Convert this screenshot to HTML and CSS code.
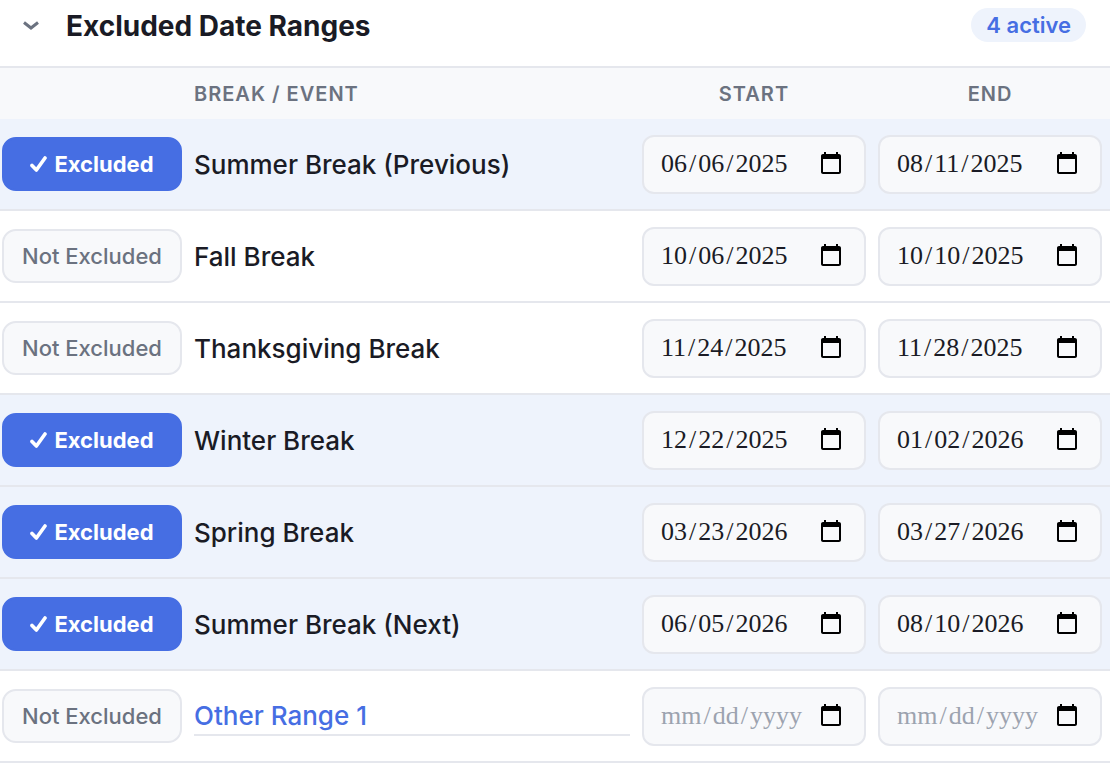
FILE: index.html
```html
<!DOCTYPE html>
<html lang="en">
<head>
<meta charset="utf-8">
<title>Excluded Date Ranges</title>
<link rel="stylesheet" href="styles.css">
</head>
<body>
<section class="panel">
  <header class="panel-header">
    <button class="collapse" type="button" aria-label="Collapse section" aria-expanded="true">
      <svg class="chevron" viewBox="0 0 18 18" aria-hidden="true"><path d="M2 5.5 9 11 16 5.5"/></svg>
    </button>
    <h2 class="panel-title">Excluded Date Ranges</h2>
    <span class="badge">4 active</span>
  </header>
  <table class="ranges">
    <thead>
      <tr>
        <th class="col-toggle"></th>
        <th class="col-name" scope="col">BREAK / EVENT</th>
        <th class="col-date" scope="col">START</th>
        <th class="col-date col-end" scope="col">END</th>
      </tr>
    </thead>
    <tbody>
      <tr class="is-excluded">
        <td class="col-toggle"><button class="toggle toggle-on" type="button" aria-pressed="true"><svg class="check" viewBox="0 0 18 18" aria-hidden="true"><path d="M2 10.4 6.4 15 15 3"/></svg>Excluded</button></td>
        <td class="col-name">Summer Break (Previous)</td>
        <td class="col-date"><input class="date" type="date" aria-label="Summer Break (Previous) start" value="2025-06-06"></td>
        <td class="col-date col-end"><input class="date" type="date" aria-label="Summer Break (Previous) end" value="2025-08-11"></td>
      </tr>
      <tr>
        <td class="col-toggle"><button class="toggle" type="button" aria-pressed="false">Not Excluded</button></td>
        <td class="col-name">Fall Break</td>
        <td class="col-date"><input class="date" type="date" aria-label="Fall Break start" value="2025-10-06"></td>
        <td class="col-date col-end"><input class="date" type="date" aria-label="Fall Break end" value="2025-10-10"></td>
      </tr>
      <tr>
        <td class="col-toggle"><button class="toggle" type="button" aria-pressed="false">Not Excluded</button></td>
        <td class="col-name">Thanksgiving Break</td>
        <td class="col-date"><input class="date" type="date" aria-label="Thanksgiving Break start" value="2025-11-24"></td>
        <td class="col-date col-end"><input class="date" type="date" aria-label="Thanksgiving Break end" value="2025-11-28"></td>
      </tr>
      <tr class="is-excluded">
        <td class="col-toggle"><button class="toggle toggle-on" type="button" aria-pressed="true"><svg class="check" viewBox="0 0 18 18" aria-hidden="true"><path d="M2 10.4 6.4 15 15 3"/></svg>Excluded</button></td>
        <td class="col-name">Winter Break</td>
        <td class="col-date"><input class="date" type="date" aria-label="Winter Break start" value="2025-12-22"></td>
        <td class="col-date col-end"><input class="date" type="date" aria-label="Winter Break end" value="2026-01-02"></td>
      </tr>
      <tr class="is-excluded">
        <td class="col-toggle"><button class="toggle toggle-on" type="button" aria-pressed="true"><svg class="check" viewBox="0 0 18 18" aria-hidden="true"><path d="M2 10.4 6.4 15 15 3"/></svg>Excluded</button></td>
        <td class="col-name">Spring Break</td>
        <td class="col-date"><input class="date" type="date" aria-label="Spring Break start" value="2026-03-23"></td>
        <td class="col-date col-end"><input class="date" type="date" aria-label="Spring Break end" value="2026-03-27"></td>
      </tr>
      <tr class="is-excluded">
        <td class="col-toggle"><button class="toggle toggle-on" type="button" aria-pressed="true"><svg class="check" viewBox="0 0 18 18" aria-hidden="true"><path d="M2 10.4 6.4 15 15 3"/></svg>Excluded</button></td>
        <td class="col-name">Summer Break (Next)</td>
        <td class="col-date"><input class="date" type="date" aria-label="Summer Break (Next) start" value="2026-06-05"></td>
        <td class="col-date col-end"><input class="date" type="date" aria-label="Summer Break (Next) end" value="2026-08-10"></td>
      </tr>
      <tr>
        <td class="col-toggle"><button class="toggle" type="button" aria-pressed="false">Not Excluded</button></td>
        <td class="col-name"><input class="name-input" type="text" aria-label="Range name" value="Other Range 1"></td>
        <td class="col-date"><input class="date date-empty" type="date" aria-label="Other Range 1 start"></td>
        <td class="col-date col-end"><input class="date date-empty" type="date" aria-label="Other Range 1 end"></td>
      </tr>
    </tbody>
  </table>
</section>
</body>
</html>
```
FILE: styles.css
```css
* {
  box-sizing: border-box;
}

body {
  margin: 0;
  background: #fff;
  color: #1a1b25;
  font-family: Inter, "Liberation Sans", sans-serif;
}

.panel-header {
  display: flex;
  align-items: center;
  height: 66px;
  padding: 0 24px 14px 22px;
}

.collapse {
  display: flex;
  margin: 0 26px 0 0;
  padding: 0;
  border: 0;
  background: none;
}

.chevron {
  width: 18px;
  height: 18px;
  fill: none;
  stroke: #6b7280;
  stroke-width: 3;
}

.panel-title {
  margin: 0;
  font-size: 28px;
  font-weight: 700;
  line-height: 34px;
}

.badge {
  margin: 0 0 2px auto;
  padding: 0 15px;
  border-radius: 17px;
  background: #eef3fc;
  color: #466ee3;
  font-size: 22px;
  font-weight: 600;
  line-height: 34px;
}

.ranges {
  width: 100%;
  table-layout: fixed;
  border-spacing: 0;
}

.ranges th {
  height: 53px;
  border-top: 2px solid #e5e7ed;
  background: #f8f9fb;
  color: #6b7280;
  font-size: 20px;
  font-weight: 600;
  letter-spacing: 1px;
  line-height: 24px;
}

.ranges td {
  height: 92px;
  border-bottom: 2px solid #e5e7ed;
}

.is-excluded {
  background: #eef3fc;
}

.col-toggle {
  width: 188px;
  padding: 0 6px 0 2px;
}

.col-name {
  padding: 0 6px;
  text-align: left;
  font-size: 26px;
  font-weight: 500;
}

.col-date {
  width: 236px;
  padding: 0 6px;
}

.col-end {
  width: 238px;
  padding-right: 8px;
}

.toggle {
  display: flex;
  align-items: center;
  justify-content: center;
  gap: 6px;
  width: 100%;
  height: 54px;
  padding: 0;
  border: 2px solid #e5e7ed;
  border-radius: 14px;
  background: #f8f9fb;
  color: #6b7280;
  font: 500 22px Inter, "Liberation Sans", sans-serif;
}

.toggle-on {
  border-color: #466ee3;
  background: #466ee3;
  color: #fff;
  font-weight: 700;
}

.check {
  width: 18px;
  height: 18px;
  fill: none;
  stroke: #fff;
  stroke-width: 3.6;
  stroke-linecap: round;
  stroke-linejoin: round;
}

.name-input {
  display: block;
  width: 100%;
  height: 40px;
  padding: 0;
  border: 0;
  border-bottom: 2px solid #e5e7ed;
  background: none;
  color: #466ee3;
  font: inherit;
}

.date {
  display: block;
  width: 100%;
  height: 59px;
  padding: 0 18px 0 15px;
  border: 2px solid #e5e7ed;
  border-radius: 12px;
  background: #f8f9fb;
  color: #1a1b25;
  font: 26px "Liberation Serif", serif;
}

.date::-webkit-datetime-edit-month-field,
.date::-webkit-datetime-edit-day-field,
.date::-webkit-datetime-edit-year-field {
  padding: 1px 2px 0;
}

.date-empty {
  color: #9ca3af;
}
```
